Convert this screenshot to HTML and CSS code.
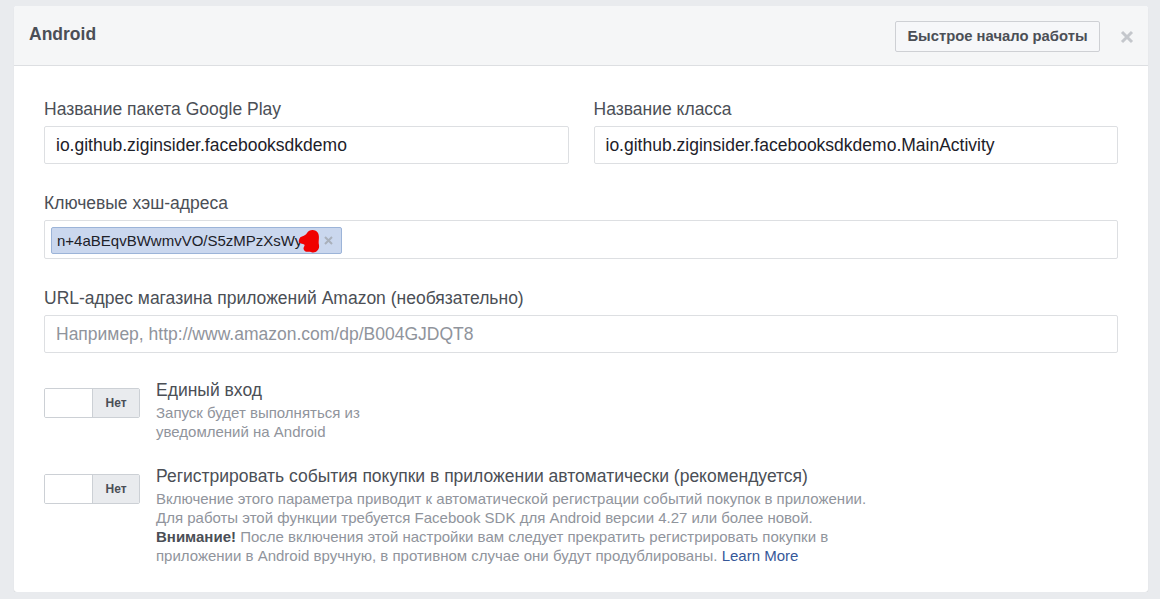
FILE: index.html
```html
<!DOCTYPE html>
<html lang="ru">
<head>
<meta charset="utf-8">
<title>Android</title>
<link rel="stylesheet" href="styles.css">
</head>
<body>
<div class="card">
  <div class="card-head">
    <div class="title">Android</div>
    <div class="head-actions">
      <button class="btn">Быстрое начало работы</button>
      <svg class="close" width="14" height="14" viewBox="0 0 14 14" aria-label="Закрыть"><path d="M2 2 L12 12 M12 2 L2 12" stroke="#c4c7cc" stroke-width="3" stroke-linecap="butt"/></svg>
    </div>
  </div>
  <div class="card-body">
    <div class="row two">
      <div class="field">
        <div class="label">Название пакета Google Play</div>
        <div class="input">io.github.ziginsider.facebooksdkdemo</div>
      </div>
      <div class="field">
        <div class="label">Название класса</div>
        <div class="input">io.github.ziginsider.facebooksdkdemo.MainActivity</div>
      </div>
    </div>
    <div class="field">
      <div class="label">Ключевые хэш-адреса</div>
      <div class="input tokens">
        <span class="token">n+4aBEqvBWwmvVO/S5zMPzXsWy<svg class="blot" width="24" height="26" viewBox="0 0 24 26"><path d="M2 12 C3 7 8 9 10 5 C12 1 19 1 21 5 C23 9 21 13 22 17 C23 22 18 26 14 24 C11 23 9 25 7 22 C5 19 10 17 6 16 C3 15 1 15 2 12 Z" fill="#f00000"/></svg><svg class="tx" width="9" height="9" viewBox="0 0 9 9"><path d="M1 1 L8 8 M8 1 L1 8" stroke="#a9b0bb" stroke-width="2"/></svg></span>
      </div>
    </div>
    <div class="field">
      <div class="label">URL-адрес магазина приложений Amazon (необязательно)</div>
      <div class="input placeholder">Например, http://www.amazon.com/dp/B004GJDQT8</div>
    </div>
    <div class="option first">
      <div class="toggle"><span class="knob"></span><span class="state">Нет</span></div>
      <div class="opt-text">
        <div class="opt-title">Единый вход</div>
        <div class="opt-desc">Запуск будет выполняться из<br>уведомлений на Android</div>
      </div>
    </div>
    <div class="option">
      <div class="toggle"><span class="knob"></span><span class="state">Нет</span></div>
      <div class="opt-text">
        <div class="opt-title">Регистрировать события покупки в приложении автоматически (рекомендуется)</div>
        <div class="opt-desc">Включение этого параметра приводит к автоматической регистрации событий покупок в приложении.<br>Для работы этой функции требуется Facebook SDK для Android версии 4.27 или более новой.<br><b>Внимание!</b> После включения этой настройки вам следует прекратить регистрировать покупки в<br>приложении в Android вручную, в противном случае они будут продублированы. <a class="link" href="#">Learn More</a></div>
      </div>
    </div>
  </div>
</div>
</body>
</html>
```

FILE: styles.css
```css
* { box-sizing: border-box; }
html, body { margin: 0; padding: 0; }
body {
  background: #e9ebee;
  font-family: "Liberation Sans", Arial, sans-serif;
  color: #4b4f56;
  padding: 6px 12px 0 14px;
}
.card {
  width: 1134px;
  height: 586px;
  background: #fff;
  border-radius: 3px;
  box-shadow: 0 1px 1px #d3d5d9;
  overflow: hidden;
}
.card-head {
  height: 60px;
  background: #f5f6f7;
  border-bottom: 1px solid #dddfe2;
  display: flex;
  align-items: center;
  justify-content: space-between;
  padding: 0 14px 0 15px;
}
.title {
  font-size: 17.5px;
  font-weight: bold;
  color: #4b4f56;
  padding-bottom: 2px;
}
.head-actions { display: flex; align-items: center; gap: 20px; }
.btn {
  height: 31px;
  width: 205px;
  padding: 0;
  font-family: "Liberation Sans", Arial, sans-serif;
  font-size: 14.8px;
  font-weight: bold;
  color: #4b4f56;
  background: #f6f7f9;
  border: 1px solid #ced0d4;
  border-radius: 2px;
  margin-top: 1px;
}
.close { display: block; margin-top: 3px; }
.card-body { padding: 33px 30px 0 30px; }
.row.two { display: grid; grid-template-columns: 1fr 1fr; gap: 25px; }
.field { margin-bottom: 29px; }
.label {
  font-size: 17.5px;
  line-height: 20px;
  color: #4b4f56;
  margin-bottom: 7px;
}
.input {
  height: 38px;
  border: 1px solid #dddfe2;
  border-radius: 2px;
  padding: 0 11px;
  font-size: 17.5px;
  line-height: 36px;
  color: #1d2129;
  white-space: nowrap;
}
.input.placeholder { color: #90949c; }
.input.tokens { height: 39px; padding: 6px 6px; line-height: 20px; }
.token {
  display: inline-flex;
  align-items: center;
  height: 27px;
  padding: 0 8px 0 5px;
  background: #cad7ee;
  border: 1px solid #9cb4d8;
  border-radius: 2px;
  font-size: 15px;
  color: #1d2129;
}
.blot { display: block; margin: 0 0 0 -5px; }
.tx { display: block; margin-left: 3px; }
.option { display: flex; align-items: flex-start; gap: 16px; }
.option.first { margin-top: 35px; margin-bottom: 33px; }
.toggle {
  display: flex;
  width: 96px;
  height: 30px;
  border: 1px solid #ccd0d5;
  border-radius: 2px;
  flex: none;
  overflow: hidden;
}
.knob { width: 48px; background: #fff; border-right: 1px solid #ccd0d5; }
.state {
  flex: 1;
  background: #e9ebee;
  font-size: 12px;
  font-weight: bold;
  color: #4b4f56;
  display: flex;
  align-items: center;
  justify-content: center;
}
.opt-text { margin-top: -8px; }
.opt-title { font-size: 17.5px; line-height: 20px; color: #4b4f56; margin-bottom: 3px; }
.opt-desc { font-size: 15px; line-height: 19px; color: #90949c; }
.opt-desc b { color: #4b4f56; }
.link { color: #365899; text-decoration: none; }
```
